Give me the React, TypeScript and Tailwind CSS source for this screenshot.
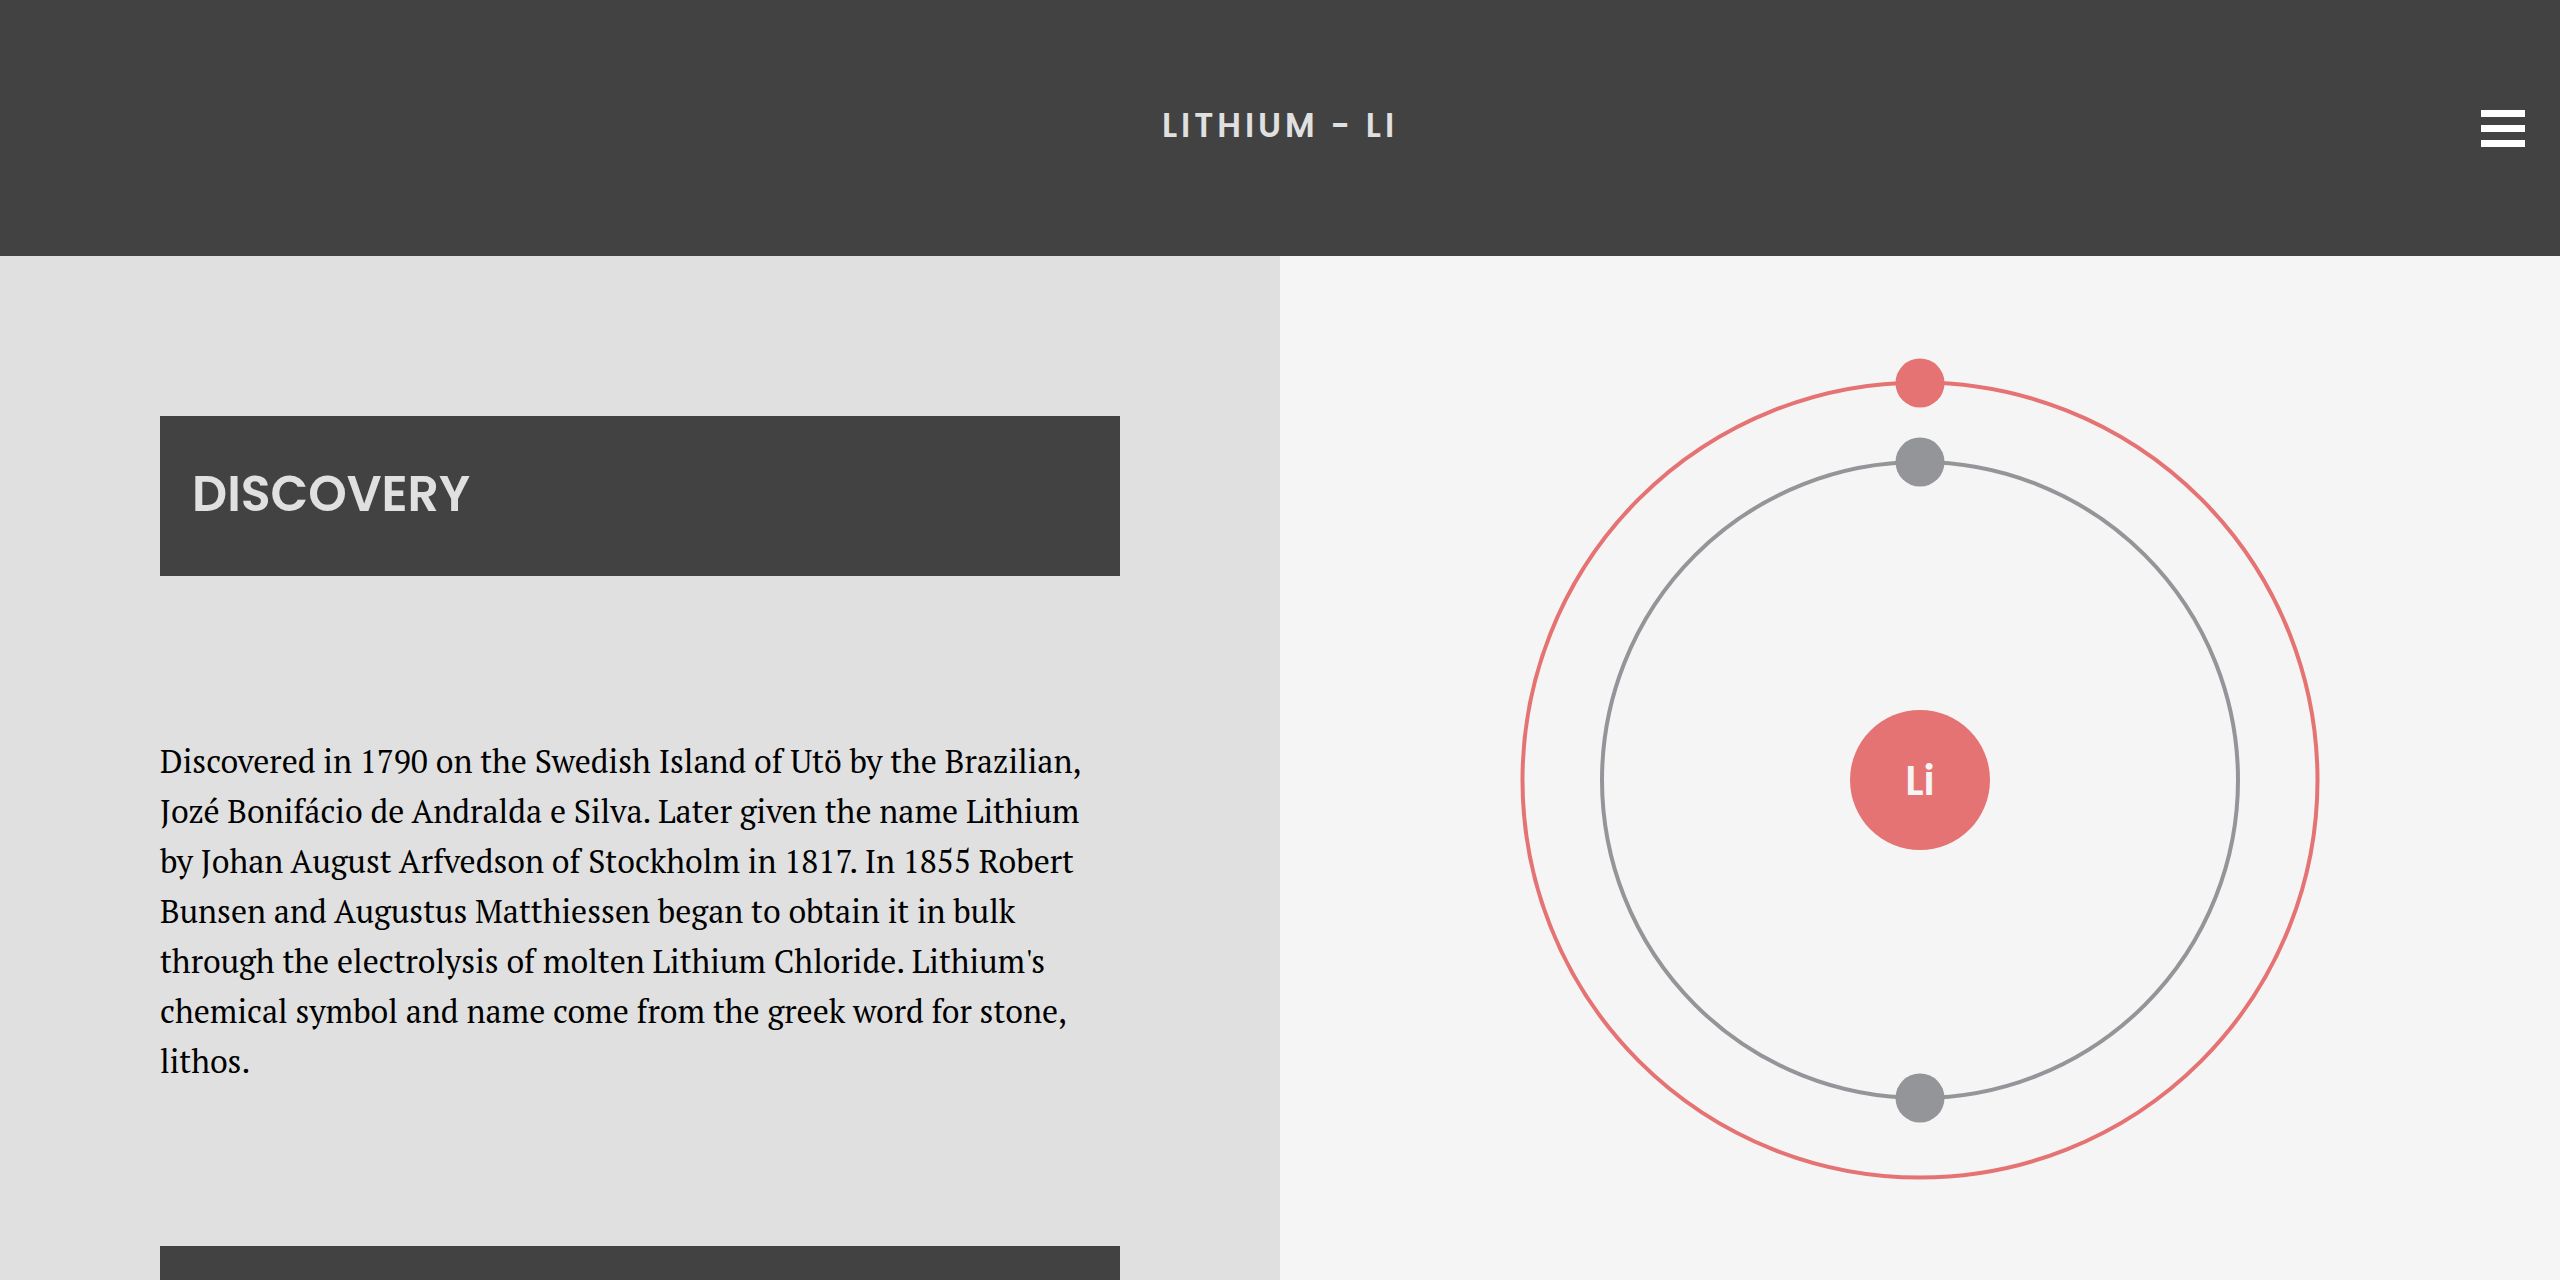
const DISCOVERY =
  "Discovered in 1790 on the Swedish Island of Utö by the Brazilian, Jozé Bonifácio de Andralda e Silva. Later given the name Lithium by Johan August Arfvedson of Stockholm in 1817. In 1855 Robert Bunsen and Augustus Matthiessen began to obtain it in bulk through the electrolysis of molten Lithium Chloride. Lithium's chemical symbol and name come from the greek word for stone, lithos.";

function Header() {
  return (
    <header className="grid h-64 shrink-0 grid-cols-[1fr_auto_1fr] items-center bg-[#424242] px-[35px]">
      <h1 className="col-start-2 pb-1 font-['Poppins','Lato',sans-serif] text-[33px] leading-8 font-semibold tracking-[4px] text-[#e0e0e0] uppercase">
        Lithium - Li
      </h1>
      <button type="button" aria-label="Open menu" className="flex flex-col gap-2 justify-self-end">
        <span className="h-[7px] w-11 bg-white" />
        <span className="h-[7px] w-11 bg-white" />
        <span className="h-[7px] w-11 bg-white" />
      </button>
    </header>
  );
}

function AtomDiagram() {
  return (
    <svg viewBox="0 0 848 848" role="img" aria-label="Lithium electron shells" className="w-full max-w-[848px]">
      <g fill="none" strokeWidth="4">
        <circle cx="424" cy="424" r="397.5" stroke="#e57373" />
        <circle cx="424" cy="424" r="318" stroke="#939598" />
      </g>
      <circle cx="424" cy="27" r="24.5" fill="#e57373" />
      <circle cx="424" cy="106" r="24.5" fill="#939598" />
      <circle cx="424" cy="742" r="24.5" fill="#939598" />
      <circle cx="424" cy="424" r="70" fill="#e57373" />
      <text
        x="424"
        y="439"
        textAnchor="middle"
        className="fill-[#f5f5f5] font-['Poppins','Lato',sans-serif] text-[40px] font-semibold"
      >
        Li
      </text>
    </svg>
  );
}

export default function App() {
  return (
    <div className="flex h-screen flex-col overflow-hidden bg-[#f5f5f5]">
      <Header />
      <main className="grid min-h-0 flex-1 grid-cols-2">
        <article className="flex flex-col overflow-hidden bg-[#e0e0e0] px-40 pt-40">
          <h2 className="flex h-40 shrink-0 items-center bg-[#424242] px-8 pb-1 font-['Poppins','Lato',sans-serif] text-[49px] leading-none font-semibold text-[#e0e0e0]">
            DISCOVERY
          </h2>
          <p className="py-40 font-['PT_Serif','Liberation_Serif',serif] text-[32px] leading-[50px] text-black">
            {DISCOVERY}
          </p>
          <div className="h-40 shrink-0 bg-[#424242]" />
        </article>
        <section className="flex items-start justify-center px-8 pt-[100px]">
          <AtomDiagram />
        </section>
      </main>
    </div>
  );
}
